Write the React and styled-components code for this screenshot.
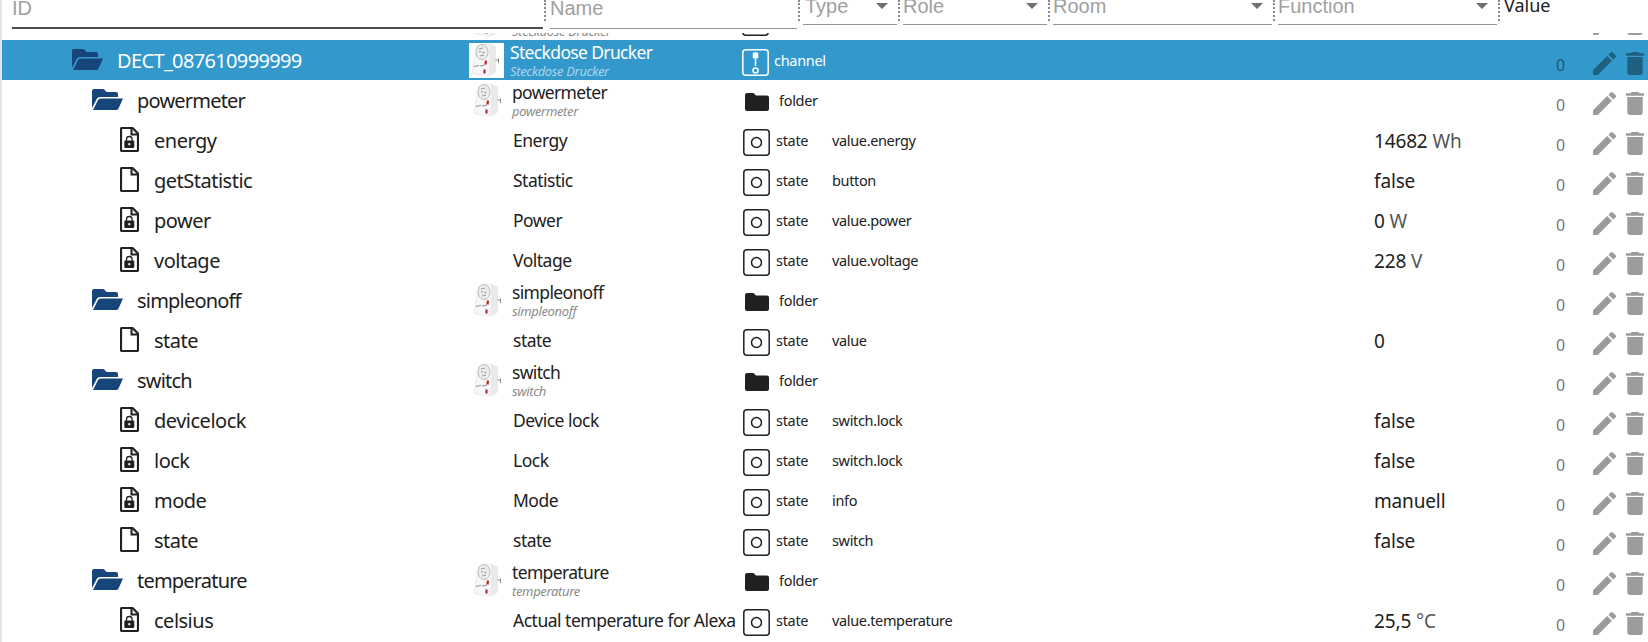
import React from 'react';
import styled, { createGlobalStyle } from 'styled-components';

const Global = createGlobalStyle`
  *{box-sizing:border-box}
  body{margin:0;background:#fff;font-family:"Noto Sans","Open Sans",sans-serif;color:#212121}
`;
const Page = styled.div`height:642px;width:1648px;overflow:hidden;border-left:2px solid #e4e4e4;`;
const Header = styled.div`display:flex;height:33px;font-family:"Liberation Sans",Arial,sans-serif;font-size:20px;color:#a0a0a0;padding-left:10px;`;
const Field = styled.div`
  width:${p => p.$w}px;height:${p => p.$h}px;margin-right:${p => p.$gap}px;flex:none;display:flex;justify-content:space-between;
  border-bottom:${p => p.$line || '1px solid #949494'};position:relative;
  span{line-height:24px;margin-top:${p => p.$top}px;margin-left:${p => p.$ml || 0}px;}
  &::after{content:"";position:absolute;right:-3px;top:0;height:21px;border-right:2px dotted #8b8b8b;}
  svg{margin:3px 9px 0 0;}
`;
const ValueHead = styled.div`font-family:"Noto Sans",sans-serif;font-size:18px;color:#212121;line-height:24px;margin-top:-7px;`;
const Row = styled.div`
  display:grid;grid-template-columns:466px 275px 89px 542px 182px 37px 55px;grid-template-rows:40px;height:40px;width:1646px;flex:none;
  background:${p => p.$sel ? '#3399cc' : 'transparent'};color:${p => p.$sel ? '#fff' : '#212121'};
`;
const IdCell = styled.div`display:flex;align-items:center;height:40px;padding-top:2px;padding-left:${p => p.$pad}px;font-size:20px;letter-spacing:${p => p.$ls}px;line-height:38px;
  svg{flex:none;margin-top:-3px;margin-right:${p => p.$gap}px;}`;
const Cut = styled.div`height:7px;overflow:hidden;display:flex;flex-direction:column;justify-content:flex-end;`;
const NameCell = styled.div`display:flex;height:40px;align-items:center;white-space:nowrap;font-size:17.5px;letter-spacing:-.5px;padding-left:${p => p.$pad}px;`;
const Names = styled.div`display:flex;flex-direction:column;margin-left:6px;line-height:24px;height:40px;letter-spacing:-.65px;
  em{font-size:13px;line-height:14px;letter-spacing:-.35px;color:${p => p.$sel ? '#a9d4ea' : '#8b8b8b'};}`;
const TypeCell = styled.div`display:flex;align-items:center;height:40px;font-size:14.5px;letter-spacing:-.3px;margin-left:${p => p.$pad}px;
  svg{flex:none;margin-top:4px;margin-right:${p => p.$gap}px;}`;
const Role = styled.div`font-size:14.5px;letter-spacing:-.35px;line-height:40px;`;
const Value = styled.div`font-size:19px;letter-spacing:-.15px;line-height:38px;padding-top:2px;white-space:nowrap;span{color:#555}`;
const Count = styled.div`font-size:16px;line-height:30px;height:40px;padding-top:10px;color:${p => p.$sel ? '#1b5673' : '#777'};`;
const Tool = styled.div`display:flex;gap:10px;height:40px;align-items:center;padding-top:6px;color:${p => p.$sel ? '#1f5f80' : '#9c9c9c'};`;

const FolderOpen = () => <svg width="31" height="21" viewBox="0 0 31 21" fill="#174479"><path d="M0 19V2Q0 0 2 0H11Q12.500 0 13.500 2L14.500 3H24Q26 3 26 5V8H8Q6 8 5 9.500Z"/><path d="M1 21L6 11Q6.700 9.500 8.500 9.500H31L26.500 19.500Q26 21 24 21Z"/></svg>;
const FileIcon = ({ locked }) => <svg width="19" height="25" viewBox="0 0 19 25" fill="none"><path d="M2 1H12.500L18 6.500V23Q18 24 17 24H2Q1 24 1 23V2Q1 1 2 1Z" stroke="#212121" strokeWidth="2.200"/><path d="M11.500 1V7.500H18" stroke="#212121" strokeWidth="2"/>{locked && <><rect x="4.300" y="13.500" width="10" height="7.500" rx="1" fill="#212121"/><path d="M6.500 14V12.300a2.800 2.800 0 0 1 5.600 0V14" stroke="#212121" strokeWidth="1.300"/><circle cx="9.300" cy="17.200" r="1.100" fill="#fff"/></>}</svg>;
const Plug = () => <svg width="35" height="35" viewBox="0 0 35 35"><rect width="35" height="35" fill="#fff"/><path d="M8 3L20 1L26.500 4V29L20 33L3 30.500Z" fill="#f7f7f7" stroke="#e0e0e0" strokeWidth=".7"/><path d="M20 1L26.500 4V29L20 33Z" fill="#e9e9e9"/><ellipse cx="13" cy="9" rx="6" ry="7.500" fill="#ededed" stroke="#bdbdbd"/><path d="M10 6l4-1M10 9l2-.5M11 13l4-1" stroke="#999"/><circle cx="14.500" cy="9.500" r=".8" fill="#777"/><path d="M5 23.500L10 22.500M11 23L16 22" stroke="#888" strokeWidth=".9"/><path d="M17 17.500L16.500 21.500M15.500 26.500V30.500" stroke="#c02232" strokeWidth="2.200"/><path d="M26.500 17H30M29.500 15.500V20" stroke="#888"/></svg>;
const StateIcon = () => <svg width="27" height="27" viewBox="0 0 27 27" fill="none" stroke="currentColor" strokeWidth="1.500"><rect x=".8" y=".8" width="25.400" height="25.400" rx="3"/><circle cx="13.500" cy="13.500" r="5"/></svg>;
const ChannelIcon = () => <svg width="27" height="27" viewBox="0 0 27 27" fill="none" stroke="currentColor" strokeWidth="1.500"><rect x=".8" y=".8" width="25.400" height="25.400" rx="3"/><circle cx="13.500" cy="21.500" r="2.500"/><path d="M13.500 17V3"/><path d="M11.500 4.500h4v4h-4z" fill="currentColor"/></svg>;
const FolderIcon = () => <svg width="24" height="18" viewBox="0 0 24 18"><path fill="#212121" d="M2 0H8.500L11 2.500H22Q24 2.500 24 4.500V16Q24 18 22 18H2Q0 18 0 16V2Q0 0 2 0Z"/></svg>;
const Arrow = () => <svg width="12" height="6" viewBox="0 0 12 6"><path d="M0 0H12L6 6Z" fill="#707070"/></svg>;
const Pencil = () => <svg width="23" height="23" viewBox="3 3 18 18" fill="currentColor"><path d="M3 17.250V21h3.750L17.810 9.940l-3.750-3.750L3 17.250zM20.710 7.040a1 1 0 0 0 0-1.410l-2.340-2.340a1 1 0 0 0-1.410 0l-1.830 1.830 3.750 3.750 1.830-1.830z"/></svg>;
const Trash = () => <svg width="18" height="23" viewBox="5 3 14 18" preserveAspectRatio="none" fill="currentColor"><path d="M6 19c0 1.100.9 2 2 2h8c1.100 0 2-.9 2-2V7H6v12zM19 4h-3.500l-1-1h-5l-1 1H5v2h14V4z"/></svg>;

const rows = [
  ['c', 'DECT_087610999999', 'Steckdose Drucker'],
  ['f', 'powermeter', 'powermeter'],
  ['l', 'energy', 'Energy', 'value.energy', '14682', 'Wh'],
  ['s', 'getStatistic', 'Statistic', 'button', 'false'],
  ['l', 'power', 'Power', 'value.power', '0', 'W'],
  ['l', 'voltage', 'Voltage', 'value.voltage', '228', 'V'],
  ['f', 'simpleonoff', 'simpleonoff'],
  ['s', 'state', 'state', 'value', '0'],
  ['f', 'switch', 'switch'],
  ['l', 'devicelock', 'Device lock', 'switch.lock', 'false'],
  ['l', 'lock', 'Lock', 'switch.lock', 'false'],
  ['l', 'mode', 'Mode', 'info', 'manuell'],
  ['s', 'state', 'state', 'switch', 'false'],
  ['f', 'temperature', 'temperature'],
  ['l', 'celsius', 'Actual temperature for Alexa', 'value.temperature', '25,5', '°C'],
];

function ObjectRow({ data: [kind, id, name, role, value, unit] }) {
  const sel = kind === 'c', device = kind === 'd', dir = sel || device || kind === 'f';
  return <Row $sel={sel}>
    <IdCell $pad={sel ? 70 : dir ? 90 : 118} $gap={dir ? 14 : 15} $ls={sel ? -.65 : dir ? -.8 : -.5}>{id && (dir ? <FolderOpen/> : <FileIcon locked={kind === 'l'}/>)}{id}</IdCell>
    <NameCell $pad={sel ? 1 : dir ? 3 : 45}>{dir ? <><Plug/><Names $sel={sel}>{name}<em>{name}</em></Names></> : name}</NameCell>
    <TypeCell $pad={sel || device ? -1 : dir ? 2 : 0} $gap={sel ? 5 : dir ? 10 : 6}>{sel ? <ChannelIcon/> : dir && !device ? <FolderIcon/> : <StateIcon/>}{device ? '' : sel ? 'channel' : dir ? 'folder' : 'state'}</TypeCell>
    <Role>{role}</Role>
    <Value>{value}{unit && <span> {unit}</span>}</Value>
    <Count $sel={sel}>{device ? '' : 0}</Count>
    <Tool $sel={sel}><Pencil/><Trash/></Tool>
  </Row>;
}

export default function App() {
  return <Page>
    <Global/>
    <Header>
      <Field $w={531} $h={29} $gap={7} $top={-4} $line="2px solid #4d4d4d"><span>ID</span></Field>
      <Field $w={247} $h={29} $gap={6} $top={-4}><span>Name</span></Field>
      <Field $w={94} $h={25} $gap={6} $top={-6} $ml={2}><span>Type</span><Arrow/></Field>
      <Field $w={144} $h={25} $gap={6} $top={-6}><span>Role</span><Arrow/></Field>
      <Field $w={219} $h={25} $gap={6} $top={-6}><span>Room</span><Arrow/></Field>
      <Field $w={219} $h={25} $gap={7} $top={-6}><span>Function</span><Arrow/></Field>
      <ValueHead>Value</ValueHead>
    </Header>
    <Cut><ObjectRow data={['d', '', 'Steckdose Drucker']}/></Cut>
    {rows.map((r, i) => <ObjectRow key={i} data={r}/>)}
  </Page>;
}
